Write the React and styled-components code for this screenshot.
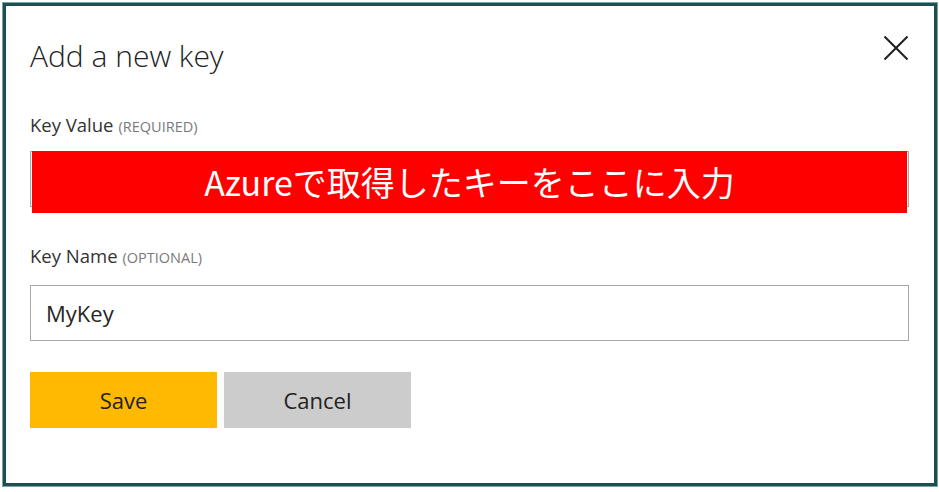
import React from 'react';
import styled, { createGlobalStyle } from 'styled-components';

const GlobalStyle = createGlobalStyle`
	html, body {
		margin: 0;
		padding: 0;
		background: #ffffff;
	}
	body {
		font-family: "Open Sans", "Noto Sans", "Noto Sans CJK JP", sans-serif;
		color: #252525;
	}
`;

const Dialog = styled.div`
	box-sizing: border-box;
	width: 934px;
	height: 483px;
	margin: 3px;
	border: 3px solid #1b4f52;
	box-shadow: 0 0 0 1px #7fa3a3;
	background: #ffffff;
	padding: 30px 25px 0 24px;
	display: flex;
	flex-direction: column;
`;

const Header = styled.div`
	display: flex;
	justify-content: space-between;
	align-items: flex-start;
`;

const Title = styled.h2`
	margin: 0;
	font-size: 30px;
	line-height: 40px;
	font-weight: 300;
	color: #222222;
`;

const CloseButton = styled.button`
	width: 26px;
	height: 26px;
	margin-top: -1px;
	padding: 0;
	border: none;
	background: none;
	color: #1e1e1e;
	cursor: pointer;
	svg {
		display: block;
	}
`;

const Field = styled.div`
	display: flex;
	flex-direction: column;
	margin-top: ${p => p.$top}px;
`;

const Label = styled.label`
	font-size: 18.5px;
	line-height: 24px;
	color: #333333;
	margin-bottom: ${p => p.$gap}px;
`;

const Hint = styled.span`
	font-size: 14.5px;
	line-height: 1;
	color: #7a7a7a;
	margin-left: 5px;
`;

const InputWrap = styled.div`
	position: relative;
`;

const Input = styled.input`
	box-sizing: border-box;
	width: 100%;
	height: 56px;
	border: 1px solid #a8a8a8;
	padding: 0 15px;
	font-family: "Open Sans", "Noto Sans", sans-serif;
	font-size: 22px;
	color: #262626;
	outline: none;
	background: #ffffff;
`;

const Annotation = styled.div`
	position: absolute;
	left: 2px;
	right: 2px;
	top: 0;
	height: 62px;
	background: #ff0000;
	color: #ffffff;
	display: flex;
	align-items: center;
	justify-content: center;
	font-family: "Noto Sans CJK JP", "Noto Sans", sans-serif;
	font-size: 34px;
	padding-bottom: 2px;
	box-sizing: border-box;
`;

const Actions = styled.div`
	display: flex;
	gap: 7px;
	margin-top: 31px;
`;

const Button = styled.button`
	width: 187px;
	height: 56px;
	border: none;
	background: ${p => (p.$primary ? '#ffb900' : '#cccccc')};
	color: #222222;
	font-family: "Open Sans", "Noto Sans", sans-serif;
	font-size: 22px;
	cursor: pointer;
`;

const App = () => {
	return (
		<>
			<GlobalStyle />
			<Dialog>
				<Header>
					<Title>Add a new key</Title>
					<CloseButton aria-label="Close">
						<svg width="26" height="26" viewBox="0 0 26 26">
							<path d="M1.5 1.5 L24.5 24.5 M24.5 1.5 L1.5 24.5" stroke="currentColor" strokeWidth="2" fill="none" />
						</svg>
					</CloseButton>
				</Header>

				<Field $top={37}>
					<Label $gap={14}>Key Value<Hint>(REQUIRED)</Hint></Label>
					<InputWrap>
						<Input type="text" defaultValue="" />
						<Annotation>Azureで取得したキーをここに入力</Annotation>
					</InputWrap>
				</Field>

				<Field $top={37}>
					<Label $gap={17}>Key Name<Hint>(OPTIONAL)</Hint></Label>
					<Input type="text" defaultValue="MyKey" />
				</Field>

				<Actions>
					<Button $primary>Save</Button>
					<Button>Cancel</Button>
				</Actions>
			</Dialog>
		</>
	);
};

export default App;
